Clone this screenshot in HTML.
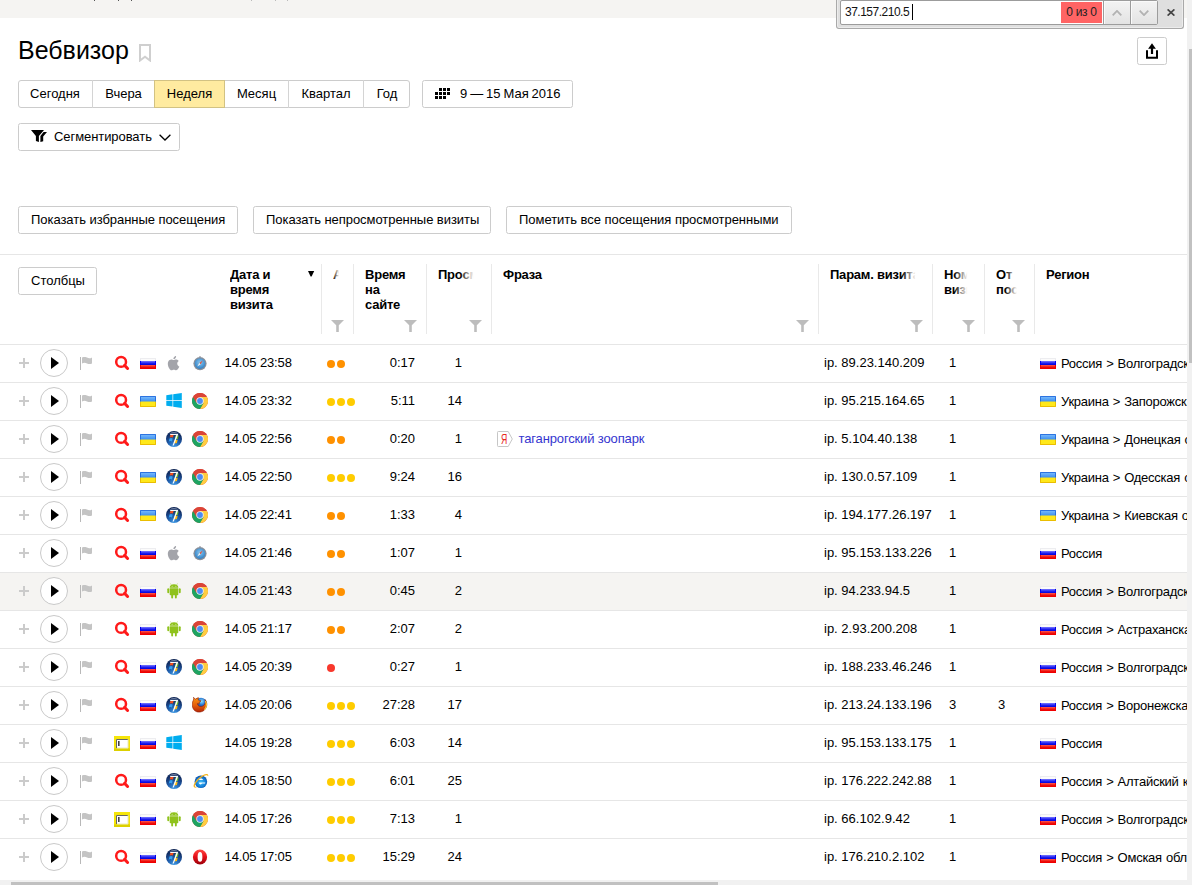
<!DOCTYPE html>
<html lang="ru"><head><meta charset="utf-8"><title>Вебвизор</title>
<style>
html,body{margin:0;padding:0}
body{width:1192px;height:885px;overflow:hidden;position:relative;background:#fff;
 font-family:"Liberation Sans",sans-serif;font-size:13px;line-height:15px;color:#000}
*{box-sizing:border-box}
.abs{position:absolute}
#page{position:absolute;left:0;top:0;width:1187px;height:880px;overflow:hidden;background:#fff}
#topbar{position:absolute;left:0;top:0;width:1187px;height:18px;background:#f5f4f2}
h1{position:absolute;left:18px;top:36px;margin:0;font-size:25px;line-height:28px;font-weight:normal;white-space:nowrap}
.btn{position:absolute;height:28px;border:1px solid #ccc;border-radius:2.5px;background:#fff;
 line-height:26px;white-space:nowrap;padding:0;text-align:left}
.btn span.t{position:absolute;top:0;white-space:nowrap}
.grp{position:absolute;left:18px;top:80px;height:28px;width:392px;border:1px solid #ccc;border-radius:3px;background:#fff}
.grp .seg{position:absolute;top:-1px;height:28px;line-height:26px;padding-top:1px;text-align:center;border-left:1px solid #d4d4d4}
.grp .seg.first{border-left:0}
.grp .seg.on{background:#ffeba0;border:1px solid #d2c283;padding-top:0}
.hline{position:absolute;left:0;width:1187px;height:1px;background:#e6e6e6}
.vsep{position:absolute;top:264px;width:1px;height:70px;background:#e9e9e9}
.th{position:absolute;top:267px;font-weight:bold;line-height:15px;white-space:nowrap;overflow:hidden;letter-spacing:-0.22px}
.fade{position:absolute;top:0;right:0;width:16px;height:100%;background:linear-gradient(to right,rgba(255,255,255,0),#fff 85%)}
.row{position:absolute;left:0;width:1187px;height:37px}
.row.hov{background:#f5f4f2}
.c{position:absolute;top:0;height:38px;line-height:35px;white-space:nowrap}
.r{text-align:right}
.rg{letter-spacing:-0.25px;word-spacing:0.7px}
.ic{position:absolute;display:block}
.play{position:absolute;left:40px;top:4px;width:28px;height:28px;border:1px solid #c9c9c9;border-radius:50%;background:#fff}
.play i{position:absolute;left:10px;top:7px;width:0;height:0;border-left:8px solid #000;border-top:6px solid transparent;border-bottom:6px solid transparent}
.dot{position:absolute;top:15px;width:8px;height:8px;border-radius:50%}
a.ph{color:#3535cf;text-decoration:none}
#find{position:absolute;left:836px;top:-1px;width:348px;height:30px;background:#dfdfdf;border:1px solid #a9a9a9;border-top:0;border-radius:0 0 3px 3px;
 box-shadow:inset 0 -1px 0 #ececec,inset 1px 0 0 #ececec,inset -1px 0 0 #ececec}
#find .inp{position:absolute;left:3px;top:1px;width:318px;height:25px;background:#fff;border:1px solid #9c9c9c;border-radius:2px}
#find .q{position:absolute;left:4px;top:0;line-height:23px;font-size:12px;letter-spacing:-0.5px;color:#111;white-space:nowrap}
#find .caret{position:absolute;left:71px;top:3px;width:1px;height:16px;background:#000}
#find .cnt{position:absolute;left:220px;top:1px;width:41px;height:21px;background:#ff6464;line-height:21px;text-align:center;font-size:12px;letter-spacing:-0.3px;color:#222;white-space:nowrap}
#find .nb{position:absolute;top:0;width:27px;height:23px;background:linear-gradient(#f3f3f3,#e3e3e3);border-left:1px solid #9c9c9c;box-shadow:inset 1px 1px 0 #fafafa}
#vsb{position:absolute;left:1187px;top:0;width:5px;height:885px;background:#f1f1f1}
#vsb i{position:absolute;left:2px;top:49px;width:3px;height:314px;background:#c1c1c1}
#hsb{position:absolute;left:0;top:880px;width:1192px;height:5px;background:#f1f1f1}
#hsb i{position:absolute;left:11px;top:2px;width:707px;height:3px;background:#c1c1c1}
</style></head>
<body>
<div id="page">
<div id="topbar"><i style="position:absolute;left:94px;top:0;width:1px;height:1px;background:#555"></i><i style="position:absolute;left:118px;top:0;width:1px;height:1px;background:#555"></i><i style="position:absolute;left:131px;top:0;width:1px;height:1px;background:#555"></i><i style="position:absolute;left:251px;top:0;width:1px;height:1px;background:#bbb"></i><i style="position:absolute;left:275px;top:0;width:1px;height:1px;background:#bbb"></i><i style="position:absolute;left:287px;top:0;width:1px;height:1px;background:#bbb"></i></div>
<h1>Вебвизор</h1>
<svg class="ic" style="left:139px;top:44px" width="12" height="18" viewBox="0 0 12 18"><path d="M1 1h10v15.5l-5-3.800-5 3.800z" fill="none" stroke="#cfcfcf" stroke-width="2"/></svg><div class="grp"><div class="seg first" style="left:-1px;width:74px">Сегодня</div><div class="seg" style="left:73px;width:62px">Вчера</div><div class="seg on" style="left:135px;width:71px">Неделя</div><div class="seg first" style="left:206px;width:63px">Месяц</div><div class="seg" style="left:269px;width:75px">Квартал</div><div class="seg" style="left:344px;width:47px">Год</div></div>
<div class="btn" style="left:422px;top:80px;width:151px;"><svg class="ic" style="left:12px;top:7px" width="15" height="11" viewBox="0 0 15 11"><g fill="#000"><rect x="4" y="0" width="3" height="3"/><rect x="8" y="0" width="3" height="3"/><rect x="12" y="0" width="3" height="3"/><rect x="0" y="4" width="3" height="3"/><rect x="4" y="4" width="3" height="3"/><rect x="8" y="4" width="3" height="3"/><rect x="12" y="4" width="3" height="3"/><rect x="0" y="8" width="3" height="3"/><rect x="4" y="8" width="3" height="3"/><rect x="8" y="8" width="3" height="3"/></g></svg><span class="t" style="left:37px;word-spacing:-0.7px">9 — 15 Мая 2016</span></div>
<div class="btn" style="left:18px;top:123px;width:162px;"><svg class="ic" style="left:12px;top:6px" width="17" height="12" viewBox="0 0 17 12"><path d="M0 0H13L7.9 6V12L4.9 11V6z" fill="#000"/><path d="M12.6 2.1H16L12.2 6.6V11.2L9.4 12V5.9z" fill="#000"/></svg><span class="t" style="left:35px;letter-spacing:-0.07px">Сегментировать</span><svg class="ic" style="left:140px;top:10px" width="12" height="7" viewBox="0 0 12 7"><path d="M0.6 0.7L6 6L11.4 0.7" fill="none" stroke="#000" stroke-width="1.3"/></svg></div>
<div class="btn" style="left:1137px;top:37px;width:30px;"><svg class="ic" style="left:8px;top:5px" width="12" height="16" viewBox="0 0 12 16"><path d="M6 0.3L9.9 5.7H7.1V11H4.9V5.7H2.1z" fill="#000"/><path d="M1 7.3V14.7H11V7.3" fill="none" stroke="#000" stroke-width="2"/></svg></div>
<div class="btn" style="left:18px;top:206px;width:220px;"><span class="t" style="left:12px;letter-spacing:-0.05px">Показать избранные посещения</span></div>
<div class="btn" style="left:253px;top:206px;width:238px;"><span class="t" style="left:12px;letter-spacing:-0.05px">Показать непросмотренные визиты</span></div>
<div class="btn" style="left:506px;top:206px;width:286px;"><span class="t" style="left:12px;letter-spacing:-0.04px">Пометить все посещения просмотренными</span></div>
<div class="hline" style="top:254px"></div>
<div class="btn" style="left:18px;top:267px;width:79px;"><span class="t" style="left:12px">Столбцы</span></div>
<div class="vsep" style="left:321px"></div><div class="vsep" style="left:353px"></div><div class="vsep" style="left:426px"></div><div class="vsep" style="left:491px"></div><div class="vsep" style="left:818px"></div><div class="vsep" style="left:932px"></div><div class="vsep" style="left:984px"></div><div class="vsep" style="left:1034px"></div>
<div class="th" style="left:230px;width:76px">Дата и<br>время<br>визита</div><div class="th" style="left:333px;width:7px">Активность<span class="fade" style="width:7px"></span></div><div class="th" style="left:365px;width:50px">Время<br>на<br>сайте</div><div class="th" style="left:438px;width:38px">Просмотры<span class="fade" style="width:16px"></span></div><div class="th" style="left:503px;width:200px">Фраза</div><div class="th" style="left:830px;width:88px">Парам. визита<span class="fade" style="width:16px"></span></div><div class="th" style="left:944px;width:26px">Номер<br>визита<span class="fade" style="width:16px"></span></div><div class="th" style="left:996px;width:23px">От<br>посл.<span class="fade" style="width:14px"></span></div><div class="th" style="left:1046px;width:100px">Регион</div>
<svg class="ic" style="left:308px;top:271px" width="7" height="6" viewBox="0 0 7 6"><path d="M0 0h6.2L3.6 5.5h-1z" fill="#000"/></svg><svg class="ic" style="left:331px;top:320px" width="13" height="12" viewBox="0 0 13 12"><path d="M0 0h13L7.800 5.300V12H5.200V5.300z" fill="#bdbdbd"/></svg><svg class="ic" style="left:404px;top:320px" width="13" height="12" viewBox="0 0 13 12"><path d="M0 0h13L7.800 5.300V12H5.200V5.300z" fill="#bdbdbd"/></svg><svg class="ic" style="left:469px;top:320px" width="13" height="12" viewBox="0 0 13 12"><path d="M0 0h13L7.800 5.300V12H5.200V5.300z" fill="#bdbdbd"/></svg><svg class="ic" style="left:796px;top:320px" width="13" height="12" viewBox="0 0 13 12"><path d="M0 0h13L7.800 5.300V12H5.200V5.300z" fill="#bdbdbd"/></svg><svg class="ic" style="left:910px;top:320px" width="13" height="12" viewBox="0 0 13 12"><path d="M0 0h13L7.800 5.300V12H5.200V5.300z" fill="#bdbdbd"/></svg><svg class="ic" style="left:962px;top:320px" width="13" height="12" viewBox="0 0 13 12"><path d="M0 0h13L7.800 5.300V12H5.200V5.300z" fill="#bdbdbd"/></svg><svg class="ic" style="left:1012px;top:320px" width="13" height="12" viewBox="0 0 13 12"><path d="M0 0h13L7.800 5.300V12H5.200V5.300z" fill="#bdbdbd"/></svg>
<div class="hline" style="top:344px"></div><div class="hline" style="top:382px"></div><div class="hline" style="top:420px"></div><div class="hline" style="top:458px"></div><div class="hline" style="top:496px"></div><div class="hline" style="top:534px"></div><div class="hline" style="top:572px"></div><div class="hline" style="top:610px"></div><div class="hline" style="top:648px"></div><div class="hline" style="top:686px"></div><div class="hline" style="top:724px"></div><div class="hline" style="top:762px"></div><div class="hline" style="top:800px"></div><div class="hline" style="top:838px"></div>
<div class="row" style="top:345px"><svg class="ic" style="left:18px;top:12px" width="12" height="12" viewBox="0 0 12 12"><path d="M6 1v10M1 6h10" stroke="#cbcbcb" stroke-width="2" fill="none"/></svg><div class="play"><i></i></div><svg class="ic" style="left:80px;top:12px" width="14" height="13" viewBox="0 0 14 13"><path d="M0.5 0v13" stroke="#b8b8b8" stroke-width="1"/><path d="M2 0.6c1.7-1 3.3-.9 5 0s3.3.9 5-.2v6c-1.7.9-3.3.9-5 0s-3.3-.9-5 0z" fill="#c4c4c4"/></svg><svg class="ic" style="left:114px;top:10px" width="16" height="16" viewBox="0 0 16 16"><circle cx="7.1" cy="6.9" r="4.9" fill="none" stroke="#ff1a1a" stroke-width="2.5"/><path d="M10.6 10.4l3 3.1" stroke="#ff1a1a" stroke-width="3" stroke-linecap="round"/></svg><svg class="ic" style="left:140px;top:13px" width="16" height="11" viewBox="0 0 16 11"><linearGradient id="g1" x1="0" y1="0" x2="0" y2="1"><stop offset="0" stop-color="#7a7aff"/><stop offset=".55" stop-color="#2020f0"/><stop offset="1" stop-color="#0000d8"/></linearGradient><linearGradient id="g2" x1="0" y1="0" x2="0" y2="1"><stop offset="0" stop-color="#ff5a50"/><stop offset=".6" stop-color="#f02018"/><stop offset="1" stop-color="#e80000"/></linearGradient><rect width="16" height="11" fill="#fbfbfb"/><rect x="0" y="0" width="16" height="1" fill="#ededf0"/><rect x="0" y="1" width="1" height="2" fill="#ececf0"/><rect x="15" y="1" width="1" height="2" fill="#ececf0"/><rect y="3" width="16" height="4.2" fill="#0000f0"/><rect y="7" width="16" height="4" fill="#f00000"/><rect x="1" y="3" width="14" height="4" fill="url(#g1)"/><rect x="1" y="7" width="14" height="3" fill="url(#g2)"/></svg><svg class="ic" style="left:166px;top:10px" width="16" height="16" viewBox="0 0 16 16"><path fill="#a3a4aa" d="M11.2 8.5c0-1.700 1.400-2.500 1.500-2.600-.8-1.200-2.100-1.400-2.500-1.400-1.100-.1-2.100.6-2.600.6s-1.400-.6-2.300-.6C4.100 4.500 3 5.2 2.400 6.300c-1.300 2.200-.3 5.400.9 7.200.6.900 1.300 1.800 2.2 1.800.9 0 1.200-.6 2.300-.6 1.100 0 1.400.6 2.300.6 1 0 1.600-.9 2.200-1.700.7-1 1-2 1-2-.1-.1-2.100-.8-2.100-3.100zM9.400 3.200c.5-.6.800-1.400.7-2.200-.7 0-1.500.5-2 1-.4.500-.8 1.300-.7 2.100.8.100 1.500-.4 2-.9z"/></svg><svg class="ic" style="left:192px;top:10px" width="16" height="16" viewBox="0 0 16 16"><radialGradient id="g3" cx=".5" cy=".4" r=".6"><stop offset="0" stop-color="#8cc8f0"/><stop offset="1" stop-color="#2f7fc4"/></radialGradient><circle cx="8" cy="8.6" r="6.6" fill="#8a8f99"/><circle cx="8" cy="8.6" r="5.3" fill="url(#g3)"/><path d="M10.700 5.600L7.300 8 8.600 9.300z" fill="#e8503a"/><path d="M5.300 11.600L7.300 8l1.300 1.300z" fill="#f4f4f4"/><rect x="7.300" y="1.200" width="1.400" height="1.200" fill="#8a8f99"/></svg><div class="c" style="left:224.6px;letter-spacing:-0.14px">14.05 23:58</div><i class="dot" style="left:327px;background:#ff9100"></i><i class="dot" style="left:337px;background:#ff9100"></i><div class="c r" style="left:355px;width:60px">0:17</div><div class="c r" style="left:428px;width:34px">1</div><div class="c" style="left:824px">ip. 89.23.140.209</div><div class="c" style="left:949px">1</div><svg class="ic" style="left:1040px;top:13px" width="16" height="11" viewBox="0 0 16 11"><linearGradient id="g4" x1="0" y1="0" x2="0" y2="1"><stop offset="0" stop-color="#7a7aff"/><stop offset=".55" stop-color="#2020f0"/><stop offset="1" stop-color="#0000d8"/></linearGradient><linearGradient id="g5" x1="0" y1="0" x2="0" y2="1"><stop offset="0" stop-color="#ff5a50"/><stop offset=".6" stop-color="#f02018"/><stop offset="1" stop-color="#e80000"/></linearGradient><rect width="16" height="11" fill="#fbfbfb"/><rect x="0" y="0" width="16" height="1" fill="#ededf0"/><rect x="0" y="1" width="1" height="2" fill="#ececf0"/><rect x="15" y="1" width="1" height="2" fill="#ececf0"/><rect y="3" width="16" height="4.2" fill="#0000f0"/><rect y="7" width="16" height="4" fill="#f00000"/><rect x="1" y="3" width="14" height="4" fill="url(#g4)"/><rect x="1" y="7" width="14" height="3" fill="url(#g5)"/></svg><div class="c rg" style="left:1061px;top:1px">Россия &gt; Волгоградская область</div></div>
<div class="row" style="top:383px"><svg class="ic" style="left:18px;top:12px" width="12" height="12" viewBox="0 0 12 12"><path d="M6 1v10M1 6h10" stroke="#cbcbcb" stroke-width="2" fill="none"/></svg><div class="play"><i></i></div><svg class="ic" style="left:80px;top:12px" width="14" height="13" viewBox="0 0 14 13"><path d="M0.5 0v13" stroke="#b8b8b8" stroke-width="1"/><path d="M2 0.6c1.7-1 3.3-.9 5 0s3.3.9 5-.2v6c-1.7.9-3.3.9-5 0s-3.3-.9-5 0z" fill="#c4c4c4"/></svg><svg class="ic" style="left:114px;top:10px" width="16" height="16" viewBox="0 0 16 16"><circle cx="7.1" cy="6.9" r="4.9" fill="none" stroke="#ff1a1a" stroke-width="2.5"/><path d="M10.6 10.4l3 3.1" stroke="#ff1a1a" stroke-width="3" stroke-linecap="round"/></svg><svg class="ic" style="left:140px;top:13px" width="16" height="11" viewBox="0 0 16 11"><linearGradient id="g6" x1="0" y1="0" x2="0" y2="1"><stop offset="0" stop-color="#7fc0ff"/><stop offset="1" stop-color="#3d8fee"/></linearGradient><rect width="16" height="11" fill="#ffe81a"/><rect width="16" height="5.5" fill="url(#g6)"/><path d="M0.5 0.5H15.5V5.5" fill="none" stroke="#1b62d8" stroke-opacity=".8"/><path d="M0.5 0.5V5.5" fill="none" stroke="#1b62d8" stroke-opacity=".8"/><path d="M0.5 6V10.5H15.5V6" fill="none" stroke="#e8b800" stroke-opacity=".9"/></svg><svg class="ic" style="left:166px;top:10px" width="16" height="16" viewBox="0 0 16 16"><path fill="#00adef" d="M0.3 2.200L6.500 1.300V7.100H0.3zM7.200 1.200L15.800 0V7.100H7.200zM0.3 7.800H6.500V13.600L0.3 12.700zM7.200 7.800H15.800V14.900L7.200 13.700z"/></svg><svg class="ic" style="left:192px;top:10px" width="16" height="16" viewBox="0 0 16 16"><circle cx="8" cy="8" r="8" fill="#db4437"/><path d="M8 8L1.070 4A8 8 0 0 0 8 16L11.460 10z" fill="#1da462"/><path d="M8 16A8 8 0 0 0 14.930 4H8L11.460 10z" fill="#ffcd40"/><path d="M8 8L1.070 4L4.540 10z" fill="#1da462"/><path d="M1.070 4A8 8 0 0 1 14.930 4H8z" fill="#db4437"/><path d="M8 4H14.930L11.460 10z" fill="#ffcd40"/><path d="M4.540 10L8 4L1.070 4z" fill="#db4437"/><path d="M4.540 10L8 16L11.460 10z" fill="#1da462"/><circle cx="8" cy="8" r="3.7" fill="#f1f1f1"/><circle cx="8" cy="8" r="2.9" fill="#4c8bf5"/></svg><div class="c" style="left:224.6px;letter-spacing:-0.14px">14.05 23:32</div><i class="dot" style="left:327px;background:#ffcc00"></i><i class="dot" style="left:337px;background:#ffcc00"></i><i class="dot" style="left:347px;background:#ffcc00"></i><div class="c r" style="left:355px;width:60px">5:11</div><div class="c r" style="left:428px;width:34px">14</div><div class="c" style="left:824px">ip. 95.215.164.65</div><div class="c" style="left:949px">1</div><svg class="ic" style="left:1040px;top:13px" width="16" height="11" viewBox="0 0 16 11"><linearGradient id="g7" x1="0" y1="0" x2="0" y2="1"><stop offset="0" stop-color="#7fc0ff"/><stop offset="1" stop-color="#3d8fee"/></linearGradient><rect width="16" height="11" fill="#ffe81a"/><rect width="16" height="5.5" fill="url(#g7)"/><path d="M0.5 0.5H15.5V5.5" fill="none" stroke="#1b62d8" stroke-opacity=".8"/><path d="M0.5 0.5V5.5" fill="none" stroke="#1b62d8" stroke-opacity=".8"/><path d="M0.5 6V10.5H15.5V6" fill="none" stroke="#e8b800" stroke-opacity=".9"/></svg><div class="c rg" style="left:1061px;top:1px">Украина &gt; Запорожская область</div></div>
<div class="row" style="top:421px"><svg class="ic" style="left:18px;top:12px" width="12" height="12" viewBox="0 0 12 12"><path d="M6 1v10M1 6h10" stroke="#cbcbcb" stroke-width="2" fill="none"/></svg><div class="play"><i></i></div><svg class="ic" style="left:80px;top:12px" width="14" height="13" viewBox="0 0 14 13"><path d="M0.5 0v13" stroke="#b8b8b8" stroke-width="1"/><path d="M2 0.6c1.7-1 3.3-.9 5 0s3.3.9 5-.2v6c-1.7.9-3.3.9-5 0s-3.3-.9-5 0z" fill="#c4c4c4"/></svg><svg class="ic" style="left:114px;top:10px" width="16" height="16" viewBox="0 0 16 16"><circle cx="7.1" cy="6.9" r="4.9" fill="none" stroke="#ff1a1a" stroke-width="2.5"/><path d="M10.6 10.4l3 3.1" stroke="#ff1a1a" stroke-width="3" stroke-linecap="round"/></svg><svg class="ic" style="left:140px;top:13px" width="16" height="11" viewBox="0 0 16 11"><linearGradient id="g8" x1="0" y1="0" x2="0" y2="1"><stop offset="0" stop-color="#7fc0ff"/><stop offset="1" stop-color="#3d8fee"/></linearGradient><rect width="16" height="11" fill="#ffe81a"/><rect width="16" height="5.5" fill="url(#g8)"/><path d="M0.5 0.5H15.5V5.5" fill="none" stroke="#1b62d8" stroke-opacity=".8"/><path d="M0.5 0.5V5.5" fill="none" stroke="#1b62d8" stroke-opacity=".8"/><path d="M0.5 6V10.5H15.5V6" fill="none" stroke="#e8b800" stroke-opacity=".9"/></svg><svg class="ic" style="left:166px;top:10px" width="16" height="16" viewBox="0 0 16 16"><radialGradient id="g9" cx=".5" cy="1" r="1"><stop offset="0" stop-color="#3f9be6"/><stop offset=".45" stop-color="#1d5aa8"/><stop offset=".8" stop-color="#122f66"/><stop offset="1" stop-color="#0c2250"/></radialGradient><circle cx="8" cy="8" r="8" fill="url(#g9)"/><path d="M3.2 2.6Q8 0 12.8 2.6Q8 1.7 3.2 2.6z" fill="#c8d0e0" fill-opacity=".7"/><path d="M4.4 3.9q1.600-.6 3.200.1l-.7 2.500q-1.500-.6-3.200 0z" fill="#f0501e"/><path d="M9.6 4.300q1.500.6 3.100-.1l-.9 3.800q-1.500.6-3 0z" fill="#6fb52c"/><path d="M3.5 7.400q1.600-.6 3.200.1l-.7 2.900q-1.500-.6-3.200 0z" fill="#36a0f0"/><path d="M8.700 8.800q1.500.6 3-.1l-.8 3.300q-1.500.6-3 0z" fill="#fdb913"/><path d="M4.300 2.900h7.900l-.3 1-4.100 10.600H6.500L10.300 4H4.100z" fill="#fff" fill-opacity=".96"/></svg><svg class="ic" style="left:192px;top:10px" width="16" height="16" viewBox="0 0 16 16"><circle cx="8" cy="8" r="8" fill="#db4437"/><path d="M8 8L1.070 4A8 8 0 0 0 8 16L11.460 10z" fill="#1da462"/><path d="M8 16A8 8 0 0 0 14.930 4H8L11.460 10z" fill="#ffcd40"/><path d="M8 8L1.070 4L4.540 10z" fill="#1da462"/><path d="M1.070 4A8 8 0 0 1 14.930 4H8z" fill="#db4437"/><path d="M8 4H14.930L11.460 10z" fill="#ffcd40"/><path d="M4.540 10L8 4L1.070 4z" fill="#db4437"/><path d="M4.540 10L8 16L11.460 10z" fill="#1da462"/><circle cx="8" cy="8" r="3.7" fill="#f1f1f1"/><circle cx="8" cy="8" r="2.9" fill="#4c8bf5"/></svg><div class="c" style="left:224.6px;letter-spacing:-0.14px">14.05 22:56</div><i class="dot" style="left:327px;background:#ff9100"></i><i class="dot" style="left:337px;background:#ff9100"></i><div class="c r" style="left:355px;width:60px">0:20</div><div class="c r" style="left:428px;width:34px">1</div><svg class="ic" style="left:496px;top:10px" width="18" height="17" viewBox="0 0 18 17"><path d="M2.3 0.5h9.9l4.1 7.5-4.1 7.5H2.3a.8.8 0 0 1-.8-.8V1.3a.8.8 0 0 1 .8-.8z" fill="#fff" stroke="#c6c6c6"/></svg><div class="c" style="left:501px;top:1px;color:#e8281e;font-size:14px;transform:scaleX(.62);transform-origin:0 50%">Я</div><div class="c" style="left:518.5px;letter-spacing:-0.14px"><a class="ph">таганрогский зоопарк</a></div><div class="c" style="left:824px">ip. 5.104.40.138</div><div class="c" style="left:949px">1</div><svg class="ic" style="left:1040px;top:13px" width="16" height="11" viewBox="0 0 16 11"><linearGradient id="g10" x1="0" y1="0" x2="0" y2="1"><stop offset="0" stop-color="#7fc0ff"/><stop offset="1" stop-color="#3d8fee"/></linearGradient><rect width="16" height="11" fill="#ffe81a"/><rect width="16" height="5.5" fill="url(#g10)"/><path d="M0.5 0.5H15.5V5.5" fill="none" stroke="#1b62d8" stroke-opacity=".8"/><path d="M0.5 0.5V5.5" fill="none" stroke="#1b62d8" stroke-opacity=".8"/><path d="M0.5 6V10.5H15.5V6" fill="none" stroke="#e8b800" stroke-opacity=".9"/></svg><div class="c rg" style="left:1061px;top:1px">Украина &gt; Донецкая область</div></div>
<div class="row" style="top:459px"><svg class="ic" style="left:18px;top:12px" width="12" height="12" viewBox="0 0 12 12"><path d="M6 1v10M1 6h10" stroke="#cbcbcb" stroke-width="2" fill="none"/></svg><div class="play"><i></i></div><svg class="ic" style="left:80px;top:12px" width="14" height="13" viewBox="0 0 14 13"><path d="M0.5 0v13" stroke="#b8b8b8" stroke-width="1"/><path d="M2 0.6c1.7-1 3.3-.9 5 0s3.3.9 5-.2v6c-1.7.9-3.3.9-5 0s-3.3-.9-5 0z" fill="#c4c4c4"/></svg><svg class="ic" style="left:114px;top:10px" width="16" height="16" viewBox="0 0 16 16"><circle cx="7.1" cy="6.9" r="4.9" fill="none" stroke="#ff1a1a" stroke-width="2.5"/><path d="M10.6 10.4l3 3.1" stroke="#ff1a1a" stroke-width="3" stroke-linecap="round"/></svg><svg class="ic" style="left:140px;top:13px" width="16" height="11" viewBox="0 0 16 11"><linearGradient id="g11" x1="0" y1="0" x2="0" y2="1"><stop offset="0" stop-color="#7fc0ff"/><stop offset="1" stop-color="#3d8fee"/></linearGradient><rect width="16" height="11" fill="#ffe81a"/><rect width="16" height="5.5" fill="url(#g11)"/><path d="M0.5 0.5H15.5V5.5" fill="none" stroke="#1b62d8" stroke-opacity=".8"/><path d="M0.5 0.5V5.5" fill="none" stroke="#1b62d8" stroke-opacity=".8"/><path d="M0.5 6V10.5H15.5V6" fill="none" stroke="#e8b800" stroke-opacity=".9"/></svg><svg class="ic" style="left:166px;top:10px" width="16" height="16" viewBox="0 0 16 16"><radialGradient id="g12" cx=".5" cy="1" r="1"><stop offset="0" stop-color="#3f9be6"/><stop offset=".45" stop-color="#1d5aa8"/><stop offset=".8" stop-color="#122f66"/><stop offset="1" stop-color="#0c2250"/></radialGradient><circle cx="8" cy="8" r="8" fill="url(#g12)"/><path d="M3.2 2.6Q8 0 12.8 2.6Q8 1.7 3.2 2.6z" fill="#c8d0e0" fill-opacity=".7"/><path d="M4.4 3.9q1.600-.6 3.200.1l-.7 2.500q-1.500-.6-3.200 0z" fill="#f0501e"/><path d="M9.6 4.300q1.500.6 3.100-.1l-.9 3.800q-1.500.6-3 0z" fill="#6fb52c"/><path d="M3.5 7.400q1.600-.6 3.200.1l-.7 2.900q-1.500-.6-3.200 0z" fill="#36a0f0"/><path d="M8.700 8.800q1.500.6 3-.1l-.8 3.300q-1.500.6-3 0z" fill="#fdb913"/><path d="M4.300 2.900h7.900l-.3 1-4.100 10.600H6.500L10.300 4H4.100z" fill="#fff" fill-opacity=".96"/></svg><svg class="ic" style="left:192px;top:10px" width="16" height="16" viewBox="0 0 16 16"><circle cx="8" cy="8" r="8" fill="#db4437"/><path d="M8 8L1.070 4A8 8 0 0 0 8 16L11.460 10z" fill="#1da462"/><path d="M8 16A8 8 0 0 0 14.930 4H8L11.460 10z" fill="#ffcd40"/><path d="M8 8L1.070 4L4.540 10z" fill="#1da462"/><path d="M1.070 4A8 8 0 0 1 14.930 4H8z" fill="#db4437"/><path d="M8 4H14.930L11.460 10z" fill="#ffcd40"/><path d="M4.540 10L8 4L1.070 4z" fill="#db4437"/><path d="M4.540 10L8 16L11.460 10z" fill="#1da462"/><circle cx="8" cy="8" r="3.7" fill="#f1f1f1"/><circle cx="8" cy="8" r="2.9" fill="#4c8bf5"/></svg><div class="c" style="left:224.6px;letter-spacing:-0.14px">14.05 22:50</div><i class="dot" style="left:327px;background:#ffcc00"></i><i class="dot" style="left:337px;background:#ffcc00"></i><i class="dot" style="left:347px;background:#ffcc00"></i><div class="c r" style="left:355px;width:60px">9:24</div><div class="c r" style="left:428px;width:34px">16</div><div class="c" style="left:824px">ip. 130.0.57.109</div><div class="c" style="left:949px">1</div><svg class="ic" style="left:1040px;top:13px" width="16" height="11" viewBox="0 0 16 11"><linearGradient id="g13" x1="0" y1="0" x2="0" y2="1"><stop offset="0" stop-color="#7fc0ff"/><stop offset="1" stop-color="#3d8fee"/></linearGradient><rect width="16" height="11" fill="#ffe81a"/><rect width="16" height="5.5" fill="url(#g13)"/><path d="M0.5 0.5H15.5V5.5" fill="none" stroke="#1b62d8" stroke-opacity=".8"/><path d="M0.5 0.5V5.5" fill="none" stroke="#1b62d8" stroke-opacity=".8"/><path d="M0.5 6V10.5H15.5V6" fill="none" stroke="#e8b800" stroke-opacity=".9"/></svg><div class="c rg" style="left:1061px;top:1px">Украина &gt; Одесская область</div></div>
<div class="row" style="top:497px"><svg class="ic" style="left:18px;top:12px" width="12" height="12" viewBox="0 0 12 12"><path d="M6 1v10M1 6h10" stroke="#cbcbcb" stroke-width="2" fill="none"/></svg><div class="play"><i></i></div><svg class="ic" style="left:80px;top:12px" width="14" height="13" viewBox="0 0 14 13"><path d="M0.5 0v13" stroke="#b8b8b8" stroke-width="1"/><path d="M2 0.6c1.7-1 3.3-.9 5 0s3.3.9 5-.2v6c-1.7.9-3.3.9-5 0s-3.3-.9-5 0z" fill="#c4c4c4"/></svg><svg class="ic" style="left:114px;top:10px" width="16" height="16" viewBox="0 0 16 16"><circle cx="7.1" cy="6.9" r="4.9" fill="none" stroke="#ff1a1a" stroke-width="2.5"/><path d="M10.6 10.4l3 3.1" stroke="#ff1a1a" stroke-width="3" stroke-linecap="round"/></svg><svg class="ic" style="left:140px;top:13px" width="16" height="11" viewBox="0 0 16 11"><linearGradient id="g14" x1="0" y1="0" x2="0" y2="1"><stop offset="0" stop-color="#7fc0ff"/><stop offset="1" stop-color="#3d8fee"/></linearGradient><rect width="16" height="11" fill="#ffe81a"/><rect width="16" height="5.5" fill="url(#g14)"/><path d="M0.5 0.5H15.5V5.5" fill="none" stroke="#1b62d8" stroke-opacity=".8"/><path d="M0.5 0.5V5.5" fill="none" stroke="#1b62d8" stroke-opacity=".8"/><path d="M0.5 6V10.5H15.5V6" fill="none" stroke="#e8b800" stroke-opacity=".9"/></svg><svg class="ic" style="left:166px;top:10px" width="16" height="16" viewBox="0 0 16 16"><radialGradient id="g15" cx=".5" cy="1" r="1"><stop offset="0" stop-color="#3f9be6"/><stop offset=".45" stop-color="#1d5aa8"/><stop offset=".8" stop-color="#122f66"/><stop offset="1" stop-color="#0c2250"/></radialGradient><circle cx="8" cy="8" r="8" fill="url(#g15)"/><path d="M3.2 2.6Q8 0 12.8 2.6Q8 1.7 3.2 2.6z" fill="#c8d0e0" fill-opacity=".7"/><path d="M4.4 3.9q1.600-.6 3.200.1l-.7 2.500q-1.500-.6-3.200 0z" fill="#f0501e"/><path d="M9.6 4.300q1.500.6 3.100-.1l-.9 3.800q-1.500.6-3 0z" fill="#6fb52c"/><path d="M3.5 7.400q1.600-.6 3.200.1l-.7 2.900q-1.500-.6-3.200 0z" fill="#36a0f0"/><path d="M8.700 8.800q1.500.6 3-.1l-.8 3.300q-1.500.6-3 0z" fill="#fdb913"/><path d="M4.300 2.900h7.900l-.3 1-4.100 10.600H6.500L10.300 4H4.100z" fill="#fff" fill-opacity=".96"/></svg><svg class="ic" style="left:192px;top:10px" width="16" height="16" viewBox="0 0 16 16"><circle cx="8" cy="8" r="8" fill="#db4437"/><path d="M8 8L1.070 4A8 8 0 0 0 8 16L11.460 10z" fill="#1da462"/><path d="M8 16A8 8 0 0 0 14.930 4H8L11.460 10z" fill="#ffcd40"/><path d="M8 8L1.070 4L4.540 10z" fill="#1da462"/><path d="M1.070 4A8 8 0 0 1 14.930 4H8z" fill="#db4437"/><path d="M8 4H14.930L11.460 10z" fill="#ffcd40"/><path d="M4.540 10L8 4L1.070 4z" fill="#db4437"/><path d="M4.540 10L8 16L11.460 10z" fill="#1da462"/><circle cx="8" cy="8" r="3.7" fill="#f1f1f1"/><circle cx="8" cy="8" r="2.9" fill="#4c8bf5"/></svg><div class="c" style="left:224.6px;letter-spacing:-0.14px">14.05 22:41</div><i class="dot" style="left:327px;background:#ff9100"></i><i class="dot" style="left:337px;background:#ff9100"></i><div class="c r" style="left:355px;width:60px">1:33</div><div class="c r" style="left:428px;width:34px">4</div><div class="c" style="left:824px">ip. 194.177.26.197</div><div class="c" style="left:949px">1</div><svg class="ic" style="left:1040px;top:13px" width="16" height="11" viewBox="0 0 16 11"><linearGradient id="g16" x1="0" y1="0" x2="0" y2="1"><stop offset="0" stop-color="#7fc0ff"/><stop offset="1" stop-color="#3d8fee"/></linearGradient><rect width="16" height="11" fill="#ffe81a"/><rect width="16" height="5.5" fill="url(#g16)"/><path d="M0.5 0.5H15.5V5.5" fill="none" stroke="#1b62d8" stroke-opacity=".8"/><path d="M0.5 0.5V5.5" fill="none" stroke="#1b62d8" stroke-opacity=".8"/><path d="M0.5 6V10.5H15.5V6" fill="none" stroke="#e8b800" stroke-opacity=".9"/></svg><div class="c rg" style="left:1061px;top:1px">Украина &gt; Киевская область</div></div>
<div class="row" style="top:535px"><svg class="ic" style="left:18px;top:12px" width="12" height="12" viewBox="0 0 12 12"><path d="M6 1v10M1 6h10" stroke="#cbcbcb" stroke-width="2" fill="none"/></svg><div class="play"><i></i></div><svg class="ic" style="left:80px;top:12px" width="14" height="13" viewBox="0 0 14 13"><path d="M0.5 0v13" stroke="#b8b8b8" stroke-width="1"/><path d="M2 0.6c1.7-1 3.3-.9 5 0s3.3.9 5-.2v6c-1.7.9-3.3.9-5 0s-3.3-.9-5 0z" fill="#c4c4c4"/></svg><svg class="ic" style="left:114px;top:10px" width="16" height="16" viewBox="0 0 16 16"><circle cx="7.1" cy="6.9" r="4.9" fill="none" stroke="#ff1a1a" stroke-width="2.5"/><path d="M10.6 10.4l3 3.1" stroke="#ff1a1a" stroke-width="3" stroke-linecap="round"/></svg><svg class="ic" style="left:140px;top:13px" width="16" height="11" viewBox="0 0 16 11"><linearGradient id="g17" x1="0" y1="0" x2="0" y2="1"><stop offset="0" stop-color="#7a7aff"/><stop offset=".55" stop-color="#2020f0"/><stop offset="1" stop-color="#0000d8"/></linearGradient><linearGradient id="g18" x1="0" y1="0" x2="0" y2="1"><stop offset="0" stop-color="#ff5a50"/><stop offset=".6" stop-color="#f02018"/><stop offset="1" stop-color="#e80000"/></linearGradient><rect width="16" height="11" fill="#fbfbfb"/><rect x="0" y="0" width="16" height="1" fill="#ededf0"/><rect x="0" y="1" width="1" height="2" fill="#ececf0"/><rect x="15" y="1" width="1" height="2" fill="#ececf0"/><rect y="3" width="16" height="4.2" fill="#0000f0"/><rect y="7" width="16" height="4" fill="#f00000"/><rect x="1" y="3" width="14" height="4" fill="url(#g17)"/><rect x="1" y="7" width="14" height="3" fill="url(#g18)"/></svg><svg class="ic" style="left:166px;top:10px" width="16" height="16" viewBox="0 0 16 16"><path fill="#a3a4aa" d="M11.2 8.5c0-1.700 1.400-2.500 1.500-2.600-.8-1.200-2.100-1.400-2.500-1.400-1.100-.1-2.100.6-2.600.6s-1.400-.6-2.300-.6C4.100 4.500 3 5.2 2.400 6.300c-1.300 2.200-.3 5.400.9 7.200.6.900 1.300 1.800 2.2 1.800.9 0 1.200-.6 2.300-.6 1.100 0 1.400.6 2.300.6 1 0 1.600-.9 2.200-1.700.7-1 1-2 1-2-.1-.1-2.100-.8-2.100-3.100zM9.400 3.200c.5-.6.800-1.400.7-2.200-.7 0-1.500.5-2 1-.4.500-.8 1.300-.7 2.100.8.100 1.500-.4 2-.9z"/></svg><svg class="ic" style="left:192px;top:10px" width="16" height="16" viewBox="0 0 16 16"><radialGradient id="g19" cx=".5" cy=".4" r=".6"><stop offset="0" stop-color="#8cc8f0"/><stop offset="1" stop-color="#2f7fc4"/></radialGradient><circle cx="8" cy="8.6" r="6.6" fill="#8a8f99"/><circle cx="8" cy="8.6" r="5.3" fill="url(#g19)"/><path d="M10.700 5.600L7.300 8 8.600 9.300z" fill="#e8503a"/><path d="M5.300 11.600L7.300 8l1.300 1.300z" fill="#f4f4f4"/><rect x="7.300" y="1.200" width="1.400" height="1.200" fill="#8a8f99"/></svg><div class="c" style="left:224.6px;letter-spacing:-0.14px">14.05 21:46</div><i class="dot" style="left:327px;background:#ff9100"></i><i class="dot" style="left:337px;background:#ff9100"></i><div class="c r" style="left:355px;width:60px">1:07</div><div class="c r" style="left:428px;width:34px">1</div><div class="c" style="left:824px">ip. 95.153.133.226</div><div class="c" style="left:949px">1</div><svg class="ic" style="left:1040px;top:13px" width="16" height="11" viewBox="0 0 16 11"><linearGradient id="g20" x1="0" y1="0" x2="0" y2="1"><stop offset="0" stop-color="#7a7aff"/><stop offset=".55" stop-color="#2020f0"/><stop offset="1" stop-color="#0000d8"/></linearGradient><linearGradient id="g21" x1="0" y1="0" x2="0" y2="1"><stop offset="0" stop-color="#ff5a50"/><stop offset=".6" stop-color="#f02018"/><stop offset="1" stop-color="#e80000"/></linearGradient><rect width="16" height="11" fill="#fbfbfb"/><rect x="0" y="0" width="16" height="1" fill="#ededf0"/><rect x="0" y="1" width="1" height="2" fill="#ececf0"/><rect x="15" y="1" width="1" height="2" fill="#ececf0"/><rect y="3" width="16" height="4.2" fill="#0000f0"/><rect y="7" width="16" height="4" fill="#f00000"/><rect x="1" y="3" width="14" height="4" fill="url(#g20)"/><rect x="1" y="7" width="14" height="3" fill="url(#g21)"/></svg><div class="c rg" style="left:1061px;top:1px">Россия</div></div>
<div class="row hov" style="top:573px"><svg class="ic" style="left:18px;top:12px" width="12" height="12" viewBox="0 0 12 12"><path d="M6 1v10M1 6h10" stroke="#cbcbcb" stroke-width="2" fill="none"/></svg><div class="play"><i></i></div><svg class="ic" style="left:80px;top:12px" width="14" height="13" viewBox="0 0 14 13"><path d="M0.5 0v13" stroke="#b8b8b8" stroke-width="1"/><path d="M2 0.6c1.7-1 3.3-.9 5 0s3.3.9 5-.2v6c-1.7.9-3.3.9-5 0s-3.3-.9-5 0z" fill="#c4c4c4"/></svg><svg class="ic" style="left:114px;top:10px" width="16" height="16" viewBox="0 0 16 16"><circle cx="7.1" cy="6.9" r="4.9" fill="none" stroke="#ff1a1a" stroke-width="2.5"/><path d="M10.6 10.4l3 3.1" stroke="#ff1a1a" stroke-width="3" stroke-linecap="round"/></svg><svg class="ic" style="left:140px;top:13px" width="16" height="11" viewBox="0 0 16 11"><linearGradient id="g22" x1="0" y1="0" x2="0" y2="1"><stop offset="0" stop-color="#7a7aff"/><stop offset=".55" stop-color="#2020f0"/><stop offset="1" stop-color="#0000d8"/></linearGradient><linearGradient id="g23" x1="0" y1="0" x2="0" y2="1"><stop offset="0" stop-color="#ff5a50"/><stop offset=".6" stop-color="#f02018"/><stop offset="1" stop-color="#e80000"/></linearGradient><rect width="16" height="11" fill="#fbfbfb"/><rect x="0" y="0" width="16" height="1" fill="#ededf0"/><rect x="0" y="1" width="1" height="2" fill="#ececf0"/><rect x="15" y="1" width="1" height="2" fill="#ececf0"/><rect y="3" width="16" height="4.2" fill="#0000f0"/><rect y="7" width="16" height="4" fill="#f00000"/><rect x="1" y="3" width="14" height="4" fill="url(#g22)"/><rect x="1" y="7" width="14" height="3" fill="url(#g23)"/></svg><svg class="ic" style="left:166px;top:10px" width="16" height="16" viewBox="0 0 16 16"><g fill="#8fc21b"><path d="M3.7 5.300h8.600v6.200a.8.800 0 0 1-.8.800H4.500a.8.800 0 0 1-.8-.8z"/><path d="M3.7 4.800a4.300 3.600 0 0 1 8.600 0z"/><rect x="1.300" y="5.300" width="1.900" height="5" rx=".95"/><rect x="12.800" y="5.300" width="1.900" height="5" rx=".95"/><rect x="5.200" y="11" width="1.900" height="4.500" rx=".95"/><rect x="8.900" y="11" width="1.900" height="4.500" rx=".95"/></g><path d="M5.3 1.800L4.500 0.500M10.700 1.800l.8-1.300" stroke="#8fc21b" stroke-width=".5"/><circle cx="6.100" cy="3.200" r=".45" fill="#fff"/><circle cx="9.900" cy="3.200" r=".45" fill="#fff"/></svg><svg class="ic" style="left:192px;top:10px" width="16" height="16" viewBox="0 0 16 16"><circle cx="8" cy="8" r="8" fill="#db4437"/><path d="M8 8L1.070 4A8 8 0 0 0 8 16L11.460 10z" fill="#1da462"/><path d="M8 16A8 8 0 0 0 14.930 4H8L11.460 10z" fill="#ffcd40"/><path d="M8 8L1.070 4L4.540 10z" fill="#1da462"/><path d="M1.070 4A8 8 0 0 1 14.930 4H8z" fill="#db4437"/><path d="M8 4H14.930L11.460 10z" fill="#ffcd40"/><path d="M4.540 10L8 4L1.070 4z" fill="#db4437"/><path d="M4.540 10L8 16L11.460 10z" fill="#1da462"/><circle cx="8" cy="8" r="3.7" fill="#f1f1f1"/><circle cx="8" cy="8" r="2.9" fill="#4c8bf5"/></svg><div class="c" style="left:224.6px;letter-spacing:-0.14px">14.05 21:43</div><i class="dot" style="left:327px;background:#ff9100"></i><i class="dot" style="left:337px;background:#ff9100"></i><div class="c r" style="left:355px;width:60px">0:45</div><div class="c r" style="left:428px;width:34px">2</div><div class="c" style="left:824px">ip. 94.233.94.5</div><div class="c" style="left:949px">1</div><svg class="ic" style="left:1040px;top:13px" width="16" height="11" viewBox="0 0 16 11"><linearGradient id="g24" x1="0" y1="0" x2="0" y2="1"><stop offset="0" stop-color="#7a7aff"/><stop offset=".55" stop-color="#2020f0"/><stop offset="1" stop-color="#0000d8"/></linearGradient><linearGradient id="g25" x1="0" y1="0" x2="0" y2="1"><stop offset="0" stop-color="#ff5a50"/><stop offset=".6" stop-color="#f02018"/><stop offset="1" stop-color="#e80000"/></linearGradient><rect width="16" height="11" fill="#fbfbfb"/><rect x="0" y="0" width="16" height="1" fill="#ededf0"/><rect x="0" y="1" width="1" height="2" fill="#ececf0"/><rect x="15" y="1" width="1" height="2" fill="#ececf0"/><rect y="3" width="16" height="4.2" fill="#0000f0"/><rect y="7" width="16" height="4" fill="#f00000"/><rect x="1" y="3" width="14" height="4" fill="url(#g24)"/><rect x="1" y="7" width="14" height="3" fill="url(#g25)"/></svg><div class="c rg" style="left:1061px;top:1px">Россия &gt; Волгоградская область</div></div>
<div class="row" style="top:611px"><svg class="ic" style="left:18px;top:12px" width="12" height="12" viewBox="0 0 12 12"><path d="M6 1v10M1 6h10" stroke="#cbcbcb" stroke-width="2" fill="none"/></svg><div class="play"><i></i></div><svg class="ic" style="left:80px;top:12px" width="14" height="13" viewBox="0 0 14 13"><path d="M0.5 0v13" stroke="#b8b8b8" stroke-width="1"/><path d="M2 0.6c1.7-1 3.3-.9 5 0s3.3.9 5-.2v6c-1.7.9-3.3.9-5 0s-3.3-.9-5 0z" fill="#c4c4c4"/></svg><svg class="ic" style="left:114px;top:10px" width="16" height="16" viewBox="0 0 16 16"><circle cx="7.1" cy="6.9" r="4.9" fill="none" stroke="#ff1a1a" stroke-width="2.5"/><path d="M10.6 10.4l3 3.1" stroke="#ff1a1a" stroke-width="3" stroke-linecap="round"/></svg><svg class="ic" style="left:140px;top:13px" width="16" height="11" viewBox="0 0 16 11"><linearGradient id="g26" x1="0" y1="0" x2="0" y2="1"><stop offset="0" stop-color="#7a7aff"/><stop offset=".55" stop-color="#2020f0"/><stop offset="1" stop-color="#0000d8"/></linearGradient><linearGradient id="g27" x1="0" y1="0" x2="0" y2="1"><stop offset="0" stop-color="#ff5a50"/><stop offset=".6" stop-color="#f02018"/><stop offset="1" stop-color="#e80000"/></linearGradient><rect width="16" height="11" fill="#fbfbfb"/><rect x="0" y="0" width="16" height="1" fill="#ededf0"/><rect x="0" y="1" width="1" height="2" fill="#ececf0"/><rect x="15" y="1" width="1" height="2" fill="#ececf0"/><rect y="3" width="16" height="4.2" fill="#0000f0"/><rect y="7" width="16" height="4" fill="#f00000"/><rect x="1" y="3" width="14" height="4" fill="url(#g26)"/><rect x="1" y="7" width="14" height="3" fill="url(#g27)"/></svg><svg class="ic" style="left:166px;top:10px" width="16" height="16" viewBox="0 0 16 16"><g fill="#8fc21b"><path d="M3.7 5.300h8.600v6.200a.8.800 0 0 1-.8.800H4.500a.8.800 0 0 1-.8-.8z"/><path d="M3.7 4.800a4.300 3.600 0 0 1 8.600 0z"/><rect x="1.300" y="5.300" width="1.900" height="5" rx=".95"/><rect x="12.800" y="5.300" width="1.900" height="5" rx=".95"/><rect x="5.200" y="11" width="1.900" height="4.500" rx=".95"/><rect x="8.900" y="11" width="1.900" height="4.500" rx=".95"/></g><path d="M5.3 1.800L4.500 0.500M10.700 1.800l.8-1.300" stroke="#8fc21b" stroke-width=".5"/><circle cx="6.100" cy="3.200" r=".45" fill="#fff"/><circle cx="9.900" cy="3.200" r=".45" fill="#fff"/></svg><svg class="ic" style="left:192px;top:10px" width="16" height="16" viewBox="0 0 16 16"><circle cx="8" cy="8" r="8" fill="#db4437"/><path d="M8 8L1.070 4A8 8 0 0 0 8 16L11.460 10z" fill="#1da462"/><path d="M8 16A8 8 0 0 0 14.930 4H8L11.460 10z" fill="#ffcd40"/><path d="M8 8L1.070 4L4.540 10z" fill="#1da462"/><path d="M1.070 4A8 8 0 0 1 14.930 4H8z" fill="#db4437"/><path d="M8 4H14.930L11.460 10z" fill="#ffcd40"/><path d="M4.540 10L8 4L1.070 4z" fill="#db4437"/><path d="M4.540 10L8 16L11.460 10z" fill="#1da462"/><circle cx="8" cy="8" r="3.7" fill="#f1f1f1"/><circle cx="8" cy="8" r="2.9" fill="#4c8bf5"/></svg><div class="c" style="left:224.6px;letter-spacing:-0.14px">14.05 21:17</div><i class="dot" style="left:327px;background:#ff9100"></i><i class="dot" style="left:337px;background:#ff9100"></i><div class="c r" style="left:355px;width:60px">2:07</div><div class="c r" style="left:428px;width:34px">2</div><div class="c" style="left:824px">ip. 2.93.200.208</div><div class="c" style="left:949px">1</div><svg class="ic" style="left:1040px;top:13px" width="16" height="11" viewBox="0 0 16 11"><linearGradient id="g28" x1="0" y1="0" x2="0" y2="1"><stop offset="0" stop-color="#7a7aff"/><stop offset=".55" stop-color="#2020f0"/><stop offset="1" stop-color="#0000d8"/></linearGradient><linearGradient id="g29" x1="0" y1="0" x2="0" y2="1"><stop offset="0" stop-color="#ff5a50"/><stop offset=".6" stop-color="#f02018"/><stop offset="1" stop-color="#e80000"/></linearGradient><rect width="16" height="11" fill="#fbfbfb"/><rect x="0" y="0" width="16" height="1" fill="#ededf0"/><rect x="0" y="1" width="1" height="2" fill="#ececf0"/><rect x="15" y="1" width="1" height="2" fill="#ececf0"/><rect y="3" width="16" height="4.2" fill="#0000f0"/><rect y="7" width="16" height="4" fill="#f00000"/><rect x="1" y="3" width="14" height="4" fill="url(#g28)"/><rect x="1" y="7" width="14" height="3" fill="url(#g29)"/></svg><div class="c rg" style="left:1061px;top:1px">Россия &gt; Астраханская область</div></div>
<div class="row" style="top:649px"><svg class="ic" style="left:18px;top:12px" width="12" height="12" viewBox="0 0 12 12"><path d="M6 1v10M1 6h10" stroke="#cbcbcb" stroke-width="2" fill="none"/></svg><div class="play"><i></i></div><svg class="ic" style="left:80px;top:12px" width="14" height="13" viewBox="0 0 14 13"><path d="M0.5 0v13" stroke="#b8b8b8" stroke-width="1"/><path d="M2 0.6c1.7-1 3.3-.9 5 0s3.3.9 5-.2v6c-1.7.9-3.3.9-5 0s-3.3-.9-5 0z" fill="#c4c4c4"/></svg><svg class="ic" style="left:114px;top:10px" width="16" height="16" viewBox="0 0 16 16"><circle cx="7.1" cy="6.9" r="4.9" fill="none" stroke="#ff1a1a" stroke-width="2.5"/><path d="M10.6 10.4l3 3.1" stroke="#ff1a1a" stroke-width="3" stroke-linecap="round"/></svg><svg class="ic" style="left:140px;top:13px" width="16" height="11" viewBox="0 0 16 11"><linearGradient id="g30" x1="0" y1="0" x2="0" y2="1"><stop offset="0" stop-color="#7a7aff"/><stop offset=".55" stop-color="#2020f0"/><stop offset="1" stop-color="#0000d8"/></linearGradient><linearGradient id="g31" x1="0" y1="0" x2="0" y2="1"><stop offset="0" stop-color="#ff5a50"/><stop offset=".6" stop-color="#f02018"/><stop offset="1" stop-color="#e80000"/></linearGradient><rect width="16" height="11" fill="#fbfbfb"/><rect x="0" y="0" width="16" height="1" fill="#ededf0"/><rect x="0" y="1" width="1" height="2" fill="#ececf0"/><rect x="15" y="1" width="1" height="2" fill="#ececf0"/><rect y="3" width="16" height="4.2" fill="#0000f0"/><rect y="7" width="16" height="4" fill="#f00000"/><rect x="1" y="3" width="14" height="4" fill="url(#g30)"/><rect x="1" y="7" width="14" height="3" fill="url(#g31)"/></svg><svg class="ic" style="left:166px;top:10px" width="16" height="16" viewBox="0 0 16 16"><radialGradient id="g32" cx=".5" cy="1" r="1"><stop offset="0" stop-color="#3f9be6"/><stop offset=".45" stop-color="#1d5aa8"/><stop offset=".8" stop-color="#122f66"/><stop offset="1" stop-color="#0c2250"/></radialGradient><circle cx="8" cy="8" r="8" fill="url(#g32)"/><path d="M3.2 2.6Q8 0 12.8 2.6Q8 1.7 3.2 2.6z" fill="#c8d0e0" fill-opacity=".7"/><path d="M4.4 3.9q1.600-.6 3.200.1l-.7 2.500q-1.500-.6-3.200 0z" fill="#f0501e"/><path d="M9.6 4.300q1.500.6 3.100-.1l-.9 3.800q-1.500.6-3 0z" fill="#6fb52c"/><path d="M3.5 7.400q1.600-.6 3.200.1l-.7 2.900q-1.500-.6-3.200 0z" fill="#36a0f0"/><path d="M8.700 8.800q1.500.6 3-.1l-.8 3.300q-1.500.6-3 0z" fill="#fdb913"/><path d="M4.300 2.900h7.900l-.3 1-4.100 10.600H6.500L10.300 4H4.100z" fill="#fff" fill-opacity=".96"/></svg><svg class="ic" style="left:192px;top:10px" width="16" height="16" viewBox="0 0 16 16"><circle cx="8" cy="8" r="8" fill="#db4437"/><path d="M8 8L1.070 4A8 8 0 0 0 8 16L11.460 10z" fill="#1da462"/><path d="M8 16A8 8 0 0 0 14.930 4H8L11.460 10z" fill="#ffcd40"/><path d="M8 8L1.070 4L4.540 10z" fill="#1da462"/><path d="M1.070 4A8 8 0 0 1 14.930 4H8z" fill="#db4437"/><path d="M8 4H14.930L11.460 10z" fill="#ffcd40"/><path d="M4.540 10L8 4L1.070 4z" fill="#db4437"/><path d="M4.540 10L8 16L11.460 10z" fill="#1da462"/><circle cx="8" cy="8" r="3.7" fill="#f1f1f1"/><circle cx="8" cy="8" r="2.9" fill="#4c8bf5"/></svg><div class="c" style="left:224.6px;letter-spacing:-0.14px">14.05 20:39</div><i class="dot" style="left:327px;background:#f8382c"></i><div class="c r" style="left:355px;width:60px">0:27</div><div class="c r" style="left:428px;width:34px">1</div><div class="c" style="left:824px">ip. 188.233.46.246</div><div class="c" style="left:949px">1</div><svg class="ic" style="left:1040px;top:13px" width="16" height="11" viewBox="0 0 16 11"><linearGradient id="g33" x1="0" y1="0" x2="0" y2="1"><stop offset="0" stop-color="#7a7aff"/><stop offset=".55" stop-color="#2020f0"/><stop offset="1" stop-color="#0000d8"/></linearGradient><linearGradient id="g34" x1="0" y1="0" x2="0" y2="1"><stop offset="0" stop-color="#ff5a50"/><stop offset=".6" stop-color="#f02018"/><stop offset="1" stop-color="#e80000"/></linearGradient><rect width="16" height="11" fill="#fbfbfb"/><rect x="0" y="0" width="16" height="1" fill="#ededf0"/><rect x="0" y="1" width="1" height="2" fill="#ececf0"/><rect x="15" y="1" width="1" height="2" fill="#ececf0"/><rect y="3" width="16" height="4.2" fill="#0000f0"/><rect y="7" width="16" height="4" fill="#f00000"/><rect x="1" y="3" width="14" height="4" fill="url(#g33)"/><rect x="1" y="7" width="14" height="3" fill="url(#g34)"/></svg><div class="c rg" style="left:1061px;top:1px">Россия &gt; Волгоградская область</div></div>
<div class="row" style="top:687px"><svg class="ic" style="left:18px;top:12px" width="12" height="12" viewBox="0 0 12 12"><path d="M6 1v10M1 6h10" stroke="#cbcbcb" stroke-width="2" fill="none"/></svg><div class="play"><i></i></div><svg class="ic" style="left:80px;top:12px" width="14" height="13" viewBox="0 0 14 13"><path d="M0.5 0v13" stroke="#b8b8b8" stroke-width="1"/><path d="M2 0.6c1.7-1 3.3-.9 5 0s3.3.9 5-.2v6c-1.7.9-3.3.9-5 0s-3.3-.9-5 0z" fill="#c4c4c4"/></svg><svg class="ic" style="left:114px;top:10px" width="16" height="16" viewBox="0 0 16 16"><circle cx="7.1" cy="6.9" r="4.9" fill="none" stroke="#ff1a1a" stroke-width="2.5"/><path d="M10.6 10.4l3 3.1" stroke="#ff1a1a" stroke-width="3" stroke-linecap="round"/></svg><svg class="ic" style="left:140px;top:13px" width="16" height="11" viewBox="0 0 16 11"><linearGradient id="g35" x1="0" y1="0" x2="0" y2="1"><stop offset="0" stop-color="#7a7aff"/><stop offset=".55" stop-color="#2020f0"/><stop offset="1" stop-color="#0000d8"/></linearGradient><linearGradient id="g36" x1="0" y1="0" x2="0" y2="1"><stop offset="0" stop-color="#ff5a50"/><stop offset=".6" stop-color="#f02018"/><stop offset="1" stop-color="#e80000"/></linearGradient><rect width="16" height="11" fill="#fbfbfb"/><rect x="0" y="0" width="16" height="1" fill="#ededf0"/><rect x="0" y="1" width="1" height="2" fill="#ececf0"/><rect x="15" y="1" width="1" height="2" fill="#ececf0"/><rect y="3" width="16" height="4.2" fill="#0000f0"/><rect y="7" width="16" height="4" fill="#f00000"/><rect x="1" y="3" width="14" height="4" fill="url(#g35)"/><rect x="1" y="7" width="14" height="3" fill="url(#g36)"/></svg><svg class="ic" style="left:166px;top:10px" width="16" height="16" viewBox="0 0 16 16"><radialGradient id="g37" cx=".5" cy="1" r="1"><stop offset="0" stop-color="#3f9be6"/><stop offset=".45" stop-color="#1d5aa8"/><stop offset=".8" stop-color="#122f66"/><stop offset="1" stop-color="#0c2250"/></radialGradient><circle cx="8" cy="8" r="8" fill="url(#g37)"/><path d="M3.2 2.6Q8 0 12.8 2.6Q8 1.7 3.2 2.6z" fill="#c8d0e0" fill-opacity=".7"/><path d="M4.4 3.9q1.600-.6 3.200.1l-.7 2.500q-1.500-.6-3.200 0z" fill="#f0501e"/><path d="M9.6 4.300q1.500.6 3.100-.1l-.9 3.800q-1.500.6-3 0z" fill="#6fb52c"/><path d="M3.5 7.400q1.600-.6 3.200.1l-.7 2.900q-1.500-.6-3.200 0z" fill="#36a0f0"/><path d="M8.700 8.800q1.500.6 3-.1l-.8 3.300q-1.500.6-3 0z" fill="#fdb913"/><path d="M4.300 2.900h7.900l-.3 1-4.100 10.600H6.500L10.300 4H4.100z" fill="#fff" fill-opacity=".96"/></svg><svg class="ic" style="left:192px;top:10px" width="16" height="16" viewBox="0 0 16 16"><radialGradient id="g38" cx=".55" cy=".3" r=".6"><stop offset="0" stop-color="#8fe0ff"/><stop offset=".5" stop-color="#2a78d0"/><stop offset="1" stop-color="#142c8c"/></radialGradient><linearGradient id="g39" x1="0" y1="0" x2="0" y2="1"><stop offset="0" stop-color="#fa9612"/><stop offset=".55" stop-color="#e45c0c"/><stop offset="1" stop-color="#b42606"/></linearGradient><circle cx="9" cy="6.7" r="5.9" fill="url(#g38)"/><path d="M1.5 0.3c.5.8 1.200 1.400 2 1.800.9-.8 2.100-1.300 3.300-1.300-.5.500-.7 1-.6 1.600.1.7.6 1.100 1.300 1.300.5.100 1 .1 1.500.1-.2.500-.7.900-1.200 1.200-.5.300-.8.600-.8 1.100 0 .4.2.7.500.9-.7.200-1.500 0-2.100-.4 0 1.300 1 2.500 2.500 2.800 1.700.4 3.500-.3 4.500-1.700 1-1.500 1.200-3.400.6-5.100 1.200 1.300 1.800 3 1.800 4.800 0 4.300-3.500 7.700-7.800 7.700S0.200 11.600 0.200 7.400c0-1.600.4-3 1.200-4.300.3-.9.400-1.800.1-2.800z" fill="url(#g39)" stroke="#8e1c06" stroke-width=".6"/><path d="M13.6 4.500c1.300 2.600.9 5.600-.9 7.800" fill="none" stroke="#ffd23a" stroke-width="1.1" stroke-linecap="round"/></svg><div class="c" style="left:224.6px;letter-spacing:-0.14px">14.05 20:06</div><i class="dot" style="left:327px;background:#ffcc00"></i><i class="dot" style="left:337px;background:#ffcc00"></i><i class="dot" style="left:347px;background:#ffcc00"></i><div class="c r" style="left:355px;width:60px">27:28</div><div class="c r" style="left:428px;width:34px">17</div><div class="c" style="left:824px">ip. 213.24.133.196</div><div class="c" style="left:949px">3</div><div class="c" style="left:998px">3</div><svg class="ic" style="left:1040px;top:13px" width="16" height="11" viewBox="0 0 16 11"><linearGradient id="g40" x1="0" y1="0" x2="0" y2="1"><stop offset="0" stop-color="#7a7aff"/><stop offset=".55" stop-color="#2020f0"/><stop offset="1" stop-color="#0000d8"/></linearGradient><linearGradient id="g41" x1="0" y1="0" x2="0" y2="1"><stop offset="0" stop-color="#ff5a50"/><stop offset=".6" stop-color="#f02018"/><stop offset="1" stop-color="#e80000"/></linearGradient><rect width="16" height="11" fill="#fbfbfb"/><rect x="0" y="0" width="16" height="1" fill="#ededf0"/><rect x="0" y="1" width="1" height="2" fill="#ececf0"/><rect x="15" y="1" width="1" height="2" fill="#ececf0"/><rect y="3" width="16" height="4.2" fill="#0000f0"/><rect y="7" width="16" height="4" fill="#f00000"/><rect x="1" y="3" width="14" height="4" fill="url(#g40)"/><rect x="1" y="7" width="14" height="3" fill="url(#g41)"/></svg><div class="c rg" style="left:1061px;top:1px">Россия &gt; Воронежская область</div></div>
<div class="row" style="top:725px"><svg class="ic" style="left:18px;top:12px" width="12" height="12" viewBox="0 0 12 12"><path d="M6 1v10M1 6h10" stroke="#cbcbcb" stroke-width="2" fill="none"/></svg><div class="play"><i></i></div><svg class="ic" style="left:80px;top:12px" width="14" height="13" viewBox="0 0 14 13"><path d="M0.5 0v13" stroke="#b8b8b8" stroke-width="1"/><path d="M2 0.6c1.7-1 3.3-.9 5 0s3.3.9 5-.2v6c-1.7.9-3.3.9-5 0s-3.3-.9-5 0z" fill="#c4c4c4"/></svg><svg class="ic" style="left:114px;top:11px" width="16" height="15" viewBox="0 0 16 15"><rect x="0" y="0" width="16" height="15" fill="#f5e50a"/><rect x="0" y="12.5" width="16" height="2.5" fill="#dcd000"/><rect x="2.5" y="3" width="11.5" height="9" fill="#fff"/><path d="M2.5 12V3.5h11.5" stroke="#666" stroke-width="1" fill="none"/><rect x="4" y="5" width="1.6" height="5" fill="#444"/><path d="M14 3.5v8.5H3" stroke="#e8e8c0" stroke-width="1" fill="none"/></svg><svg class="ic" style="left:140px;top:13px" width="16" height="11" viewBox="0 0 16 11"><linearGradient id="g42" x1="0" y1="0" x2="0" y2="1"><stop offset="0" stop-color="#7a7aff"/><stop offset=".55" stop-color="#2020f0"/><stop offset="1" stop-color="#0000d8"/></linearGradient><linearGradient id="g43" x1="0" y1="0" x2="0" y2="1"><stop offset="0" stop-color="#ff5a50"/><stop offset=".6" stop-color="#f02018"/><stop offset="1" stop-color="#e80000"/></linearGradient><rect width="16" height="11" fill="#fbfbfb"/><rect x="0" y="0" width="16" height="1" fill="#ededf0"/><rect x="0" y="1" width="1" height="2" fill="#ececf0"/><rect x="15" y="1" width="1" height="2" fill="#ececf0"/><rect y="3" width="16" height="4.2" fill="#0000f0"/><rect y="7" width="16" height="4" fill="#f00000"/><rect x="1" y="3" width="14" height="4" fill="url(#g42)"/><rect x="1" y="7" width="14" height="3" fill="url(#g43)"/></svg><svg class="ic" style="left:166px;top:10px" width="16" height="16" viewBox="0 0 16 16"><path fill="#00adef" d="M0.3 2.200L6.500 1.300V7.100H0.3zM7.200 1.200L15.800 0V7.100H7.200zM0.3 7.800H6.500V13.600L0.3 12.700zM7.200 7.800H15.800V14.900L7.200 13.700z"/></svg><div class="c" style="left:224.6px;letter-spacing:-0.14px">14.05 19:28</div><i class="dot" style="left:327px;background:#ffcc00"></i><i class="dot" style="left:337px;background:#ffcc00"></i><i class="dot" style="left:347px;background:#ffcc00"></i><div class="c r" style="left:355px;width:60px">6:03</div><div class="c r" style="left:428px;width:34px">14</div><div class="c" style="left:824px">ip. 95.153.133.175</div><div class="c" style="left:949px">1</div><svg class="ic" style="left:1040px;top:13px" width="16" height="11" viewBox="0 0 16 11"><linearGradient id="g44" x1="0" y1="0" x2="0" y2="1"><stop offset="0" stop-color="#7a7aff"/><stop offset=".55" stop-color="#2020f0"/><stop offset="1" stop-color="#0000d8"/></linearGradient><linearGradient id="g45" x1="0" y1="0" x2="0" y2="1"><stop offset="0" stop-color="#ff5a50"/><stop offset=".6" stop-color="#f02018"/><stop offset="1" stop-color="#e80000"/></linearGradient><rect width="16" height="11" fill="#fbfbfb"/><rect x="0" y="0" width="16" height="1" fill="#ededf0"/><rect x="0" y="1" width="1" height="2" fill="#ececf0"/><rect x="15" y="1" width="1" height="2" fill="#ececf0"/><rect y="3" width="16" height="4.2" fill="#0000f0"/><rect y="7" width="16" height="4" fill="#f00000"/><rect x="1" y="3" width="14" height="4" fill="url(#g44)"/><rect x="1" y="7" width="14" height="3" fill="url(#g45)"/></svg><div class="c rg" style="left:1061px;top:1px">Россия</div></div>
<div class="row" style="top:763px"><svg class="ic" style="left:18px;top:12px" width="12" height="12" viewBox="0 0 12 12"><path d="M6 1v10M1 6h10" stroke="#cbcbcb" stroke-width="2" fill="none"/></svg><div class="play"><i></i></div><svg class="ic" style="left:80px;top:12px" width="14" height="13" viewBox="0 0 14 13"><path d="M0.5 0v13" stroke="#b8b8b8" stroke-width="1"/><path d="M2 0.6c1.7-1 3.3-.9 5 0s3.3.9 5-.2v6c-1.7.9-3.3.9-5 0s-3.3-.9-5 0z" fill="#c4c4c4"/></svg><svg class="ic" style="left:114px;top:10px" width="16" height="16" viewBox="0 0 16 16"><circle cx="7.1" cy="6.9" r="4.9" fill="none" stroke="#ff1a1a" stroke-width="2.5"/><path d="M10.6 10.4l3 3.1" stroke="#ff1a1a" stroke-width="3" stroke-linecap="round"/></svg><svg class="ic" style="left:140px;top:13px" width="16" height="11" viewBox="0 0 16 11"><linearGradient id="g46" x1="0" y1="0" x2="0" y2="1"><stop offset="0" stop-color="#7a7aff"/><stop offset=".55" stop-color="#2020f0"/><stop offset="1" stop-color="#0000d8"/></linearGradient><linearGradient id="g47" x1="0" y1="0" x2="0" y2="1"><stop offset="0" stop-color="#ff5a50"/><stop offset=".6" stop-color="#f02018"/><stop offset="1" stop-color="#e80000"/></linearGradient><rect width="16" height="11" fill="#fbfbfb"/><rect x="0" y="0" width="16" height="1" fill="#ededf0"/><rect x="0" y="1" width="1" height="2" fill="#ececf0"/><rect x="15" y="1" width="1" height="2" fill="#ececf0"/><rect y="3" width="16" height="4.2" fill="#0000f0"/><rect y="7" width="16" height="4" fill="#f00000"/><rect x="1" y="3" width="14" height="4" fill="url(#g46)"/><rect x="1" y="7" width="14" height="3" fill="url(#g47)"/></svg><svg class="ic" style="left:166px;top:10px" width="16" height="16" viewBox="0 0 16 16"><radialGradient id="g48" cx=".5" cy="1" r="1"><stop offset="0" stop-color="#3f9be6"/><stop offset=".45" stop-color="#1d5aa8"/><stop offset=".8" stop-color="#122f66"/><stop offset="1" stop-color="#0c2250"/></radialGradient><circle cx="8" cy="8" r="8" fill="url(#g48)"/><path d="M3.2 2.6Q8 0 12.8 2.6Q8 1.7 3.2 2.6z" fill="#c8d0e0" fill-opacity=".7"/><path d="M4.4 3.9q1.600-.6 3.200.1l-.7 2.500q-1.500-.6-3.200 0z" fill="#f0501e"/><path d="M9.6 4.300q1.500.6 3.100-.1l-.9 3.800q-1.500.6-3 0z" fill="#6fb52c"/><path d="M3.5 7.400q1.600-.6 3.200.1l-.7 2.900q-1.500-.6-3.200 0z" fill="#36a0f0"/><path d="M8.700 8.800q1.500.6 3-.1l-.8 3.300q-1.500.6-3 0z" fill="#fdb913"/><path d="M4.300 2.900h7.900l-.3 1-4.100 10.600H6.500L10.300 4H4.100z" fill="#fff" fill-opacity=".96"/></svg><svg class="ic" style="left:192px;top:10px" width="17" height="16" viewBox="0 0 17 16"><radialGradient id="g49" cx=".5" cy=".55" r=".6"><stop offset="0" stop-color="#3fc0f8"/><stop offset=".6" stop-color="#1480d8"/><stop offset="1" stop-color="#0a3c96"/></radialGradient><circle cx="8.9" cy="8.7" r="6.3" fill="url(#g49)"/><path d="M6.900 7.100c.2-1 1-1.600 2.100-1.600s1.900.6 2.100 1.600z" fill="#fff"/><path d="M6.700 9.600h6.600c-.1.400-.2.700-.3 1h-3c-.3.500-.7.800-1.300.8-1.100 0-1.800-.7-2-1.800z" fill="#fff"/><path d="M15.900 1.500c-1.400-1.300-5.300.3-9 3.600C3 8.500.8 12.400 1.900 14.100c.7 1 2.300.9 4.200 0-1.400.3-2.500.1-2.900-.7-.7-1.500 1.200-4.600 4.300-7.400 3-2.700 6.200-4.200 7.800-3.600.5.200.7.600.7 1.100.400-.8.400-1.500-.1-2z" fill="#f5b21a"/></svg><div class="c" style="left:224.6px;letter-spacing:-0.14px">14.05 18:50</div><i class="dot" style="left:327px;background:#ffcc00"></i><i class="dot" style="left:337px;background:#ffcc00"></i><i class="dot" style="left:347px;background:#ffcc00"></i><div class="c r" style="left:355px;width:60px">6:01</div><div class="c r" style="left:428px;width:34px">25</div><div class="c" style="left:824px">ip. 176.222.242.88</div><div class="c" style="left:949px">1</div><svg class="ic" style="left:1040px;top:13px" width="16" height="11" viewBox="0 0 16 11"><linearGradient id="g50" x1="0" y1="0" x2="0" y2="1"><stop offset="0" stop-color="#7a7aff"/><stop offset=".55" stop-color="#2020f0"/><stop offset="1" stop-color="#0000d8"/></linearGradient><linearGradient id="g51" x1="0" y1="0" x2="0" y2="1"><stop offset="0" stop-color="#ff5a50"/><stop offset=".6" stop-color="#f02018"/><stop offset="1" stop-color="#e80000"/></linearGradient><rect width="16" height="11" fill="#fbfbfb"/><rect x="0" y="0" width="16" height="1" fill="#ededf0"/><rect x="0" y="1" width="1" height="2" fill="#ececf0"/><rect x="15" y="1" width="1" height="2" fill="#ececf0"/><rect y="3" width="16" height="4.2" fill="#0000f0"/><rect y="7" width="16" height="4" fill="#f00000"/><rect x="1" y="3" width="14" height="4" fill="url(#g50)"/><rect x="1" y="7" width="14" height="3" fill="url(#g51)"/></svg><div class="c rg" style="left:1061px;top:1px">Россия &gt; Алтайский край</div></div>
<div class="row" style="top:801px"><svg class="ic" style="left:18px;top:12px" width="12" height="12" viewBox="0 0 12 12"><path d="M6 1v10M1 6h10" stroke="#cbcbcb" stroke-width="2" fill="none"/></svg><div class="play"><i></i></div><svg class="ic" style="left:80px;top:12px" width="14" height="13" viewBox="0 0 14 13"><path d="M0.5 0v13" stroke="#b8b8b8" stroke-width="1"/><path d="M2 0.6c1.7-1 3.3-.9 5 0s3.3.9 5-.2v6c-1.7.9-3.3.9-5 0s-3.3-.9-5 0z" fill="#c4c4c4"/></svg><svg class="ic" style="left:114px;top:11px" width="16" height="15" viewBox="0 0 16 15"><rect x="0" y="0" width="16" height="15" fill="#f5e50a"/><rect x="0" y="12.5" width="16" height="2.5" fill="#dcd000"/><rect x="2.5" y="3" width="11.5" height="9" fill="#fff"/><path d="M2.5 12V3.5h11.5" stroke="#666" stroke-width="1" fill="none"/><rect x="4" y="5" width="1.6" height="5" fill="#444"/><path d="M14 3.5v8.5H3" stroke="#e8e8c0" stroke-width="1" fill="none"/></svg><svg class="ic" style="left:140px;top:13px" width="16" height="11" viewBox="0 0 16 11"><linearGradient id="g52" x1="0" y1="0" x2="0" y2="1"><stop offset="0" stop-color="#7a7aff"/><stop offset=".55" stop-color="#2020f0"/><stop offset="1" stop-color="#0000d8"/></linearGradient><linearGradient id="g53" x1="0" y1="0" x2="0" y2="1"><stop offset="0" stop-color="#ff5a50"/><stop offset=".6" stop-color="#f02018"/><stop offset="1" stop-color="#e80000"/></linearGradient><rect width="16" height="11" fill="#fbfbfb"/><rect x="0" y="0" width="16" height="1" fill="#ededf0"/><rect x="0" y="1" width="1" height="2" fill="#ececf0"/><rect x="15" y="1" width="1" height="2" fill="#ececf0"/><rect y="3" width="16" height="4.2" fill="#0000f0"/><rect y="7" width="16" height="4" fill="#f00000"/><rect x="1" y="3" width="14" height="4" fill="url(#g52)"/><rect x="1" y="7" width="14" height="3" fill="url(#g53)"/></svg><svg class="ic" style="left:166px;top:10px" width="16" height="16" viewBox="0 0 16 16"><g fill="#8fc21b"><path d="M3.7 5.300h8.600v6.200a.8.800 0 0 1-.8.800H4.500a.8.800 0 0 1-.8-.8z"/><path d="M3.7 4.800a4.300 3.600 0 0 1 8.600 0z"/><rect x="1.300" y="5.300" width="1.900" height="5" rx=".95"/><rect x="12.800" y="5.300" width="1.900" height="5" rx=".95"/><rect x="5.200" y="11" width="1.900" height="4.500" rx=".95"/><rect x="8.900" y="11" width="1.900" height="4.500" rx=".95"/></g><path d="M5.3 1.800L4.500 0.500M10.700 1.800l.8-1.300" stroke="#8fc21b" stroke-width=".5"/><circle cx="6.100" cy="3.200" r=".45" fill="#fff"/><circle cx="9.900" cy="3.200" r=".45" fill="#fff"/></svg><svg class="ic" style="left:192px;top:10px" width="16" height="16" viewBox="0 0 16 16"><circle cx="8" cy="8" r="8" fill="#db4437"/><path d="M8 8L1.070 4A8 8 0 0 0 8 16L11.460 10z" fill="#1da462"/><path d="M8 16A8 8 0 0 0 14.930 4H8L11.460 10z" fill="#ffcd40"/><path d="M8 8L1.070 4L4.540 10z" fill="#1da462"/><path d="M1.070 4A8 8 0 0 1 14.930 4H8z" fill="#db4437"/><path d="M8 4H14.930L11.460 10z" fill="#ffcd40"/><path d="M4.540 10L8 4L1.070 4z" fill="#db4437"/><path d="M4.540 10L8 16L11.460 10z" fill="#1da462"/><circle cx="8" cy="8" r="3.7" fill="#f1f1f1"/><circle cx="8" cy="8" r="2.9" fill="#4c8bf5"/></svg><div class="c" style="left:224.6px;letter-spacing:-0.14px">14.05 17:26</div><i class="dot" style="left:327px;background:#ffcc00"></i><i class="dot" style="left:337px;background:#ffcc00"></i><i class="dot" style="left:347px;background:#ffcc00"></i><div class="c r" style="left:355px;width:60px">7:13</div><div class="c r" style="left:428px;width:34px">1</div><div class="c" style="left:824px">ip. 66.102.9.42</div><div class="c" style="left:949px">1</div><svg class="ic" style="left:1040px;top:13px" width="16" height="11" viewBox="0 0 16 11"><linearGradient id="g54" x1="0" y1="0" x2="0" y2="1"><stop offset="0" stop-color="#7a7aff"/><stop offset=".55" stop-color="#2020f0"/><stop offset="1" stop-color="#0000d8"/></linearGradient><linearGradient id="g55" x1="0" y1="0" x2="0" y2="1"><stop offset="0" stop-color="#ff5a50"/><stop offset=".6" stop-color="#f02018"/><stop offset="1" stop-color="#e80000"/></linearGradient><rect width="16" height="11" fill="#fbfbfb"/><rect x="0" y="0" width="16" height="1" fill="#ededf0"/><rect x="0" y="1" width="1" height="2" fill="#ececf0"/><rect x="15" y="1" width="1" height="2" fill="#ececf0"/><rect y="3" width="16" height="4.2" fill="#0000f0"/><rect y="7" width="16" height="4" fill="#f00000"/><rect x="1" y="3" width="14" height="4" fill="url(#g54)"/><rect x="1" y="7" width="14" height="3" fill="url(#g55)"/></svg><div class="c rg" style="left:1061px;top:1px">Россия &gt; Волгоградская область</div></div>
<div class="row" style="top:839px"><svg class="ic" style="left:18px;top:12px" width="12" height="12" viewBox="0 0 12 12"><path d="M6 1v10M1 6h10" stroke="#cbcbcb" stroke-width="2" fill="none"/></svg><div class="play"><i></i></div><svg class="ic" style="left:80px;top:12px" width="14" height="13" viewBox="0 0 14 13"><path d="M0.5 0v13" stroke="#b8b8b8" stroke-width="1"/><path d="M2 0.6c1.7-1 3.3-.9 5 0s3.3.9 5-.2v6c-1.7.9-3.3.9-5 0s-3.3-.9-5 0z" fill="#c4c4c4"/></svg><svg class="ic" style="left:114px;top:10px" width="16" height="16" viewBox="0 0 16 16"><circle cx="7.1" cy="6.9" r="4.9" fill="none" stroke="#ff1a1a" stroke-width="2.5"/><path d="M10.6 10.4l3 3.1" stroke="#ff1a1a" stroke-width="3" stroke-linecap="round"/></svg><svg class="ic" style="left:140px;top:13px" width="16" height="11" viewBox="0 0 16 11"><linearGradient id="g56" x1="0" y1="0" x2="0" y2="1"><stop offset="0" stop-color="#7a7aff"/><stop offset=".55" stop-color="#2020f0"/><stop offset="1" stop-color="#0000d8"/></linearGradient><linearGradient id="g57" x1="0" y1="0" x2="0" y2="1"><stop offset="0" stop-color="#ff5a50"/><stop offset=".6" stop-color="#f02018"/><stop offset="1" stop-color="#e80000"/></linearGradient><rect width="16" height="11" fill="#fbfbfb"/><rect x="0" y="0" width="16" height="1" fill="#ededf0"/><rect x="0" y="1" width="1" height="2" fill="#ececf0"/><rect x="15" y="1" width="1" height="2" fill="#ececf0"/><rect y="3" width="16" height="4.2" fill="#0000f0"/><rect y="7" width="16" height="4" fill="#f00000"/><rect x="1" y="3" width="14" height="4" fill="url(#g56)"/><rect x="1" y="7" width="14" height="3" fill="url(#g57)"/></svg><svg class="ic" style="left:166px;top:10px" width="16" height="16" viewBox="0 0 16 16"><radialGradient id="g58" cx=".5" cy="1" r="1"><stop offset="0" stop-color="#3f9be6"/><stop offset=".45" stop-color="#1d5aa8"/><stop offset=".8" stop-color="#122f66"/><stop offset="1" stop-color="#0c2250"/></radialGradient><circle cx="8" cy="8" r="8" fill="url(#g58)"/><path d="M3.2 2.6Q8 0 12.8 2.6Q8 1.7 3.2 2.6z" fill="#c8d0e0" fill-opacity=".7"/><path d="M4.4 3.9q1.600-.6 3.200.1l-.7 2.500q-1.500-.6-3.200 0z" fill="#f0501e"/><path d="M9.6 4.300q1.500.6 3.100-.1l-.9 3.800q-1.500.6-3 0z" fill="#6fb52c"/><path d="M3.5 7.400q1.600-.6 3.200.1l-.7 2.900q-1.500-.6-3.200 0z" fill="#36a0f0"/><path d="M8.700 8.800q1.500.6 3-.1l-.8 3.300q-1.500.6-3 0z" fill="#fdb913"/><path d="M4.300 2.900h7.900l-.3 1-4.100 10.600H6.500L10.300 4H4.100z" fill="#fff" fill-opacity=".96"/></svg><svg class="ic" style="left:192px;top:10px" width="16" height="16" viewBox="0 0 16 16"><linearGradient id="g59" x1="0" y1="0" x2="0" y2="1"><stop offset="0" stop-color="#ff4a44"/><stop offset=".45" stop-color="#e8121a"/><stop offset="1" stop-color="#9c000a"/></linearGradient><ellipse cx="8" cy="8" rx="7.1" ry="7.4" fill="url(#g59)"/><ellipse cx="8" cy="7.9" rx="2.4" ry="4.9" fill="#fff"/></svg><div class="c" style="left:224.6px;letter-spacing:-0.14px">14.05 17:05</div><i class="dot" style="left:327px;background:#ffcc00"></i><i class="dot" style="left:337px;background:#ffcc00"></i><i class="dot" style="left:347px;background:#ffcc00"></i><div class="c r" style="left:355px;width:60px">15:29</div><div class="c r" style="left:428px;width:34px">24</div><div class="c" style="left:824px">ip. 176.210.2.102</div><div class="c" style="left:949px">1</div><svg class="ic" style="left:1040px;top:13px" width="16" height="11" viewBox="0 0 16 11"><linearGradient id="g60" x1="0" y1="0" x2="0" y2="1"><stop offset="0" stop-color="#7a7aff"/><stop offset=".55" stop-color="#2020f0"/><stop offset="1" stop-color="#0000d8"/></linearGradient><linearGradient id="g61" x1="0" y1="0" x2="0" y2="1"><stop offset="0" stop-color="#ff5a50"/><stop offset=".6" stop-color="#f02018"/><stop offset="1" stop-color="#e80000"/></linearGradient><rect width="16" height="11" fill="#fbfbfb"/><rect x="0" y="0" width="16" height="1" fill="#ededf0"/><rect x="0" y="1" width="1" height="2" fill="#ececf0"/><rect x="15" y="1" width="1" height="2" fill="#ececf0"/><rect y="3" width="16" height="4.2" fill="#0000f0"/><rect y="7" width="16" height="4" fill="#f00000"/><rect x="1" y="3" width="14" height="4" fill="url(#g60)"/><rect x="1" y="7" width="14" height="3" fill="url(#g61)"/></svg><div class="c rg" style="left:1061px;top:1px">Россия &gt; Омская область</div></div>
</div>
<div id="find"><div class="inp"><span class="q">37.157.210.5</span><i class="caret"></i><span class="cnt">0 из 0</span><span class="nb" style="left:262px"><svg class="ic" style="left:8px;top:9px" width="10" height="6" viewBox="0 0 10 6"><path d="M0.7 5.3L5.0 0.9L9.3 5.3" fill="none" stroke="#b2b2b2" stroke-width="1.8"/></svg></span><span class="nb" style="left:289px"><svg class="ic" style="left:8px;top:9px" width="10" height="6" viewBox="0 0 10 6"><path d="M0.7 0.7L5.0 5.1L9.3 0.7" fill="none" stroke="#b2b2b2" stroke-width="1.8"/></svg></span></div><svg class="ic" style="left:330px;top:10px" width="8" height="7" viewBox="0 0 8 7"><path d="M0.6 0.4l6.8 6.2M7.4 0.4l-6.8 6.2" stroke="#444" stroke-width="1.7"/></svg></div>
<div id="vsb"><i></i></div><div id="hsb"><i></i></div>
</body></html>
